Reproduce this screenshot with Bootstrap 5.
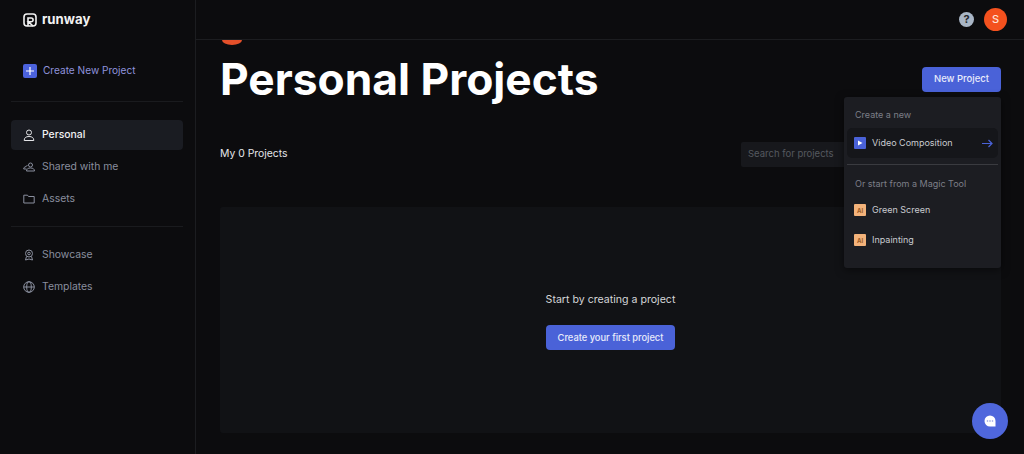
<!DOCTYPE html>
<html lang="en">
<head>
    <meta charset="UTF-8">
    <meta name="viewport" content="width=device-width, initial-scale=1.0">
    <title>Runway - Personal Projects</title>
    <link href="https://cdn.jsdelivr.net/npm/bootstrap@5.3.0/dist/css/bootstrap.min.css" rel="stylesheet">
    <style>
        html, body { height: 100%; }
        body { background: #0c0c0e; color: #fff; font-family: Inter, "Liberation Sans", sans-serif; font-size: 10.4px; overflow: hidden; }
        .app-shell { height: 454px; }
        .side-bar { width: 196px; flex: none; border-right: 1px solid #1c1d20; padding: 0 12px 0 11px; }
        .logo-row { height: 39px; padding-left: 12px; gap: 5px; font-size: 13.200px; font-weight: 700; color: #f2f2f2; }
        .create-link { height: 21px; margin-top: 21px; padding-left: 12px; gap: 6px; color: #8f93dc; font-size: 10.100px; }
        .plus-box { width: 14px; height: 14px; border-radius: 2px; background: #4b62dc; color: #fff; }
        .side-rule { border-top: 1px solid #1a1b1e; margin: 0; opacity: 1; }
        .rule-one { margin-top: 20px; margin-bottom: 18px; }
        .rule-two { margin-top: 12px; margin-bottom: 13px; }
        .side-item { height: 30px; padding-left: 12px; gap: 7px; border-radius: 4px; color: #8a8f9e; margin-bottom: 2px; }
        .side-item.is-active { background: #1a1c22; color: #f1f2f4; font-weight: 500; }
        .side-item svg { flex: none; }
        .main-pane { min-width: 0; position: relative; }
        .top-bar { height: 40px; border-bottom: 1px solid #1c1d20; padding-right: 17px; gap: 10px; }
        .help-dot { width: 15px; height: 15px; background: #a9b6c6; color: #23262c; font-size: 11px; font-weight: 700; }
        .user-dot { width: 23px; height: 23px; background: #f4511e; color: #fde3d8; font-size: 11px; font-weight: 500; }
        .page-body { padding: 0 23px 0 24px; }
        .peek-dot { width: 20px; height: 5px; margin-left: 2px; background: #e4502a; border-radius: 0 0 50% 50% / 0 0 100% 100%; }
        .page-title { font-size: 44.300px; font-weight: 700; line-height: 54px; margin: 7px 0 0; color: #fff; }
        .new-btn, .first-btn { background: #4a62d8; border: 0; color: #e8ebfb; font-size: 9.500px; font-weight: 500; border-radius: 4px; }
        .new-btn { width: 79px; height: 25px; margin-top: 22px; padding: 0; }
        .first-btn { width: 129px; height: 25px; padding: 0; font-size: 9.300px; }
        .count-row { height: 28px; margin-top: 34px; }
        .count-text { color: #e4e5e8; font-size: 10.400px; }
        .search-box { width: 110px; height: 25px; margin-right: 150px; padding-left: 7px; background: #17181c; color: #55585f; font-size: 9.500px; border-radius: 2px; }
        .empty-panel { height: 226px; margin-top: 39px; background: #111215; border-radius: 3px; padding-top: 86px; }
        .empty-text { color: #d5d6d9; font-size: 10.600px; line-height: 14px; margin-bottom: 18px; }
        .new-menu { position: absolute; top: 97px; right: 23px; width: 157px; height: 171px; background: #1c1d22; border-radius: 3px; padding: 0 3px; box-shadow: 0 2px 8px rgba(0,0,0,.5); z-index: 5; }
        .menu-head { color: #7c7f88; font-size: 9px; padding-left: 8px; line-height: 14px; }
        .head-first { padding-top: 11px; margin-bottom: 6px; }
        .head-second { margin-bottom: 4px; }
        .menu-row { height: 30px; padding: 0 5px 0 7px; gap: 6px; color: #c9cbd0; font-size: 9px; }
        .menu-row.is-hover { background: #15161a; border-radius: 5px; }
        .menu-rule { border-top: 1px solid #3a3b40; margin: 6px 0 12px; opacity: 1; }
        .play-box { width: 12px; height: 12px; border-radius: 1px; background: #4a62d8; }
        .ai-box { width: 12px; height: 12px; border-radius: 1px; background: #f3b27a; color: #9a5a24; font-size: 6px; font-weight: 700; }
        .chat-fab { position: fixed; right: 16px; bottom: 15px; width: 36px; height: 36px; background: #4f67dc; z-index: 6; }
    </style>
</head>
<body>
<div class="app-shell d-flex">
    <!-- Sidebar -->
    <aside class="side-bar">
        <div class="logo-row d-flex align-items-center">
            <svg width="14" height="14" viewBox="0 0 14 14" fill="none" stroke="#f2f2f2" stroke-width="1.6"><rect x="1" y="1" width="12" height="12" rx="3"/><path d="M5 13V5h3.2a1.8 1.8 0 0 1 0 3.8H5.5L10 13"/></svg>
            <span>runway</span>
        </div>
        <div class="create-link d-flex align-items-center">
            <span class="plus-box d-flex align-items-center justify-content-center">
                <svg width="8" height="8" viewBox="0 0 8 8" stroke="#fff" stroke-width="1.2"><path d="M4 0v8M0 4h8"/></svg>
            </span>
            <span>Create New Project</span>
        </div>
        <hr class="side-rule rule-one">
        <div class="side-item is-active d-flex align-items-center">
            <svg width="12" height="12" viewBox="0 0 12 12" fill="none" stroke="#e4e5e8"><circle cx="6" cy="3.5" r="2.5"/><path d="M1.2 11.5c0-2.6 1.6-4 4.8-4s4.800 1.400 4.800 4z"/></svg>
            <span>Personal</span>
        </div>
        <div class="side-item d-flex align-items-center">
            <svg width="12" height="12" viewBox="0 0 12 12" fill="none" stroke="#8a8f9e"><circle cx="7.500" cy="4" r="2"/><path d="M3.500 10c0-2 1.500-3 4-3s4 1 4 3zM3.500 8H.7c0-1.500 1-2.300 2.300-2.300M4.500 4.500A1.500 1.500 0 0 0 3 5.700"/></svg>
            <span>Shared with me</span>
        </div>
        <div class="side-item d-flex align-items-center">
            <svg width="12" height="12" viewBox="0 0 12 12" fill="none" stroke="#8a8f9e"><path d="M.8 2.200h3.700l1 1.300h5.700v6.500H.8z"/></svg>
            <span>Assets</span>
        </div>
        <hr class="side-rule rule-two">
        <div class="side-item d-flex align-items-center">
            <svg width="12" height="12" viewBox="0 0 12 12" fill="none" stroke="#8a8f9e"><circle cx="6" cy="4.500" r="3.500"/><circle cx="6" cy="4.500" r="1.300"/><path d="M3.500 7.500 2.500 11l3.500-1 3.500 1-1-3.500"/></svg>
            <span>Showcase</span>
        </div>
        <div class="side-item d-flex align-items-center">
            <svg width="12" height="12" viewBox="0 0 12 12" fill="none" stroke="#8a8f9e"><circle cx="6" cy="6" r="5.300"/><ellipse cx="6" cy="6" rx="2.300" ry="5.300"/><path d="M.8 6h10.400"/></svg>
            <span>Templates</span>
        </div>
    </aside>

    <!-- Main content -->
    <main class="main-pane flex-grow-1">
        <div class="top-bar d-flex align-items-center justify-content-end">
            <span class="help-dot rounded-circle d-flex align-items-center justify-content-center">?</span>
            <span class="user-dot rounded-circle d-flex align-items-center justify-content-center">S</span>
        </div>
        <div class="page-body">
            <div class="peek-dot"></div>
            <div class="d-flex justify-content-between align-items-start">
                <h1 class="page-title">Personal Projects</h1>
                <button class="btn new-btn" type="button">New Project</button>
            </div>
            <div class="count-row d-flex justify-content-between align-items-center">
                <span class="count-text">My 0 Projects</span>
                <div class="search-box d-flex align-items-center">Search for projects</div>
            </div>
            <div class="empty-panel d-flex flex-column align-items-center">
                <div class="empty-text">Start by creating a project</div>
                <button class="btn first-btn" type="button">Create your first project</button>
            </div>
        </div>

        <!-- New project menu -->
        <div class="new-menu">
            <div class="menu-head head-first">Create a new</div>
            <div class="menu-row is-hover d-flex align-items-center">
                <span class="play-box d-flex align-items-center justify-content-center">
                    <svg width="6" height="6" viewBox="0 0 6 6"><path d="M1 .5 5.500 3 1 5.500z" fill="#fff"/></svg>
                </span>
                <span class="flex-grow-1">Video Composition</span>
                <svg width="11" height="9" viewBox="0 0 11 9" fill="none" stroke="#4a62d8" stroke-width="1.200"><path d="M0 4.500h10M6.500 1l3.500 3.500L6.500 8"/></svg>
            </div>
            <hr class="menu-rule">
            <div class="menu-head head-second">Or start from a Magic Tool</div>
            <div class="menu-row d-flex align-items-center">
                <span class="ai-box d-flex align-items-center justify-content-center">AI</span>
                <span>Green Screen</span>
            </div>
            <div class="menu-row d-flex align-items-center">
                <span class="ai-box d-flex align-items-center justify-content-center">AI</span>
                <span>Inpainting</span>
            </div>
        </div>
    </main>
</div>

<!-- Chat launcher -->
<div class="chat-fab rounded-circle d-flex align-items-center justify-content-center">
    <svg width="14" height="14" viewBox="0 0 14 14"><path d="M7 1.500a5.500 5.500 0 1 0 0 11h5.500V7A5.500 5.500 0 0 0 7 1.500z" fill="#fff"/><circle cx="4.500" cy="7" r=".8" fill="#8a97e0"/><circle cx="7" cy="7" r=".8" fill="#8a97e0"/><circle cx="9.500" cy="7" r=".8" fill="#8a97e0"/></svg>
</div>

<script src="https://cdn.jsdelivr.net/npm/bootstrap@5.3.0/dist/js/bootstrap.bundle.min.js"></script>
</body>
</html>
